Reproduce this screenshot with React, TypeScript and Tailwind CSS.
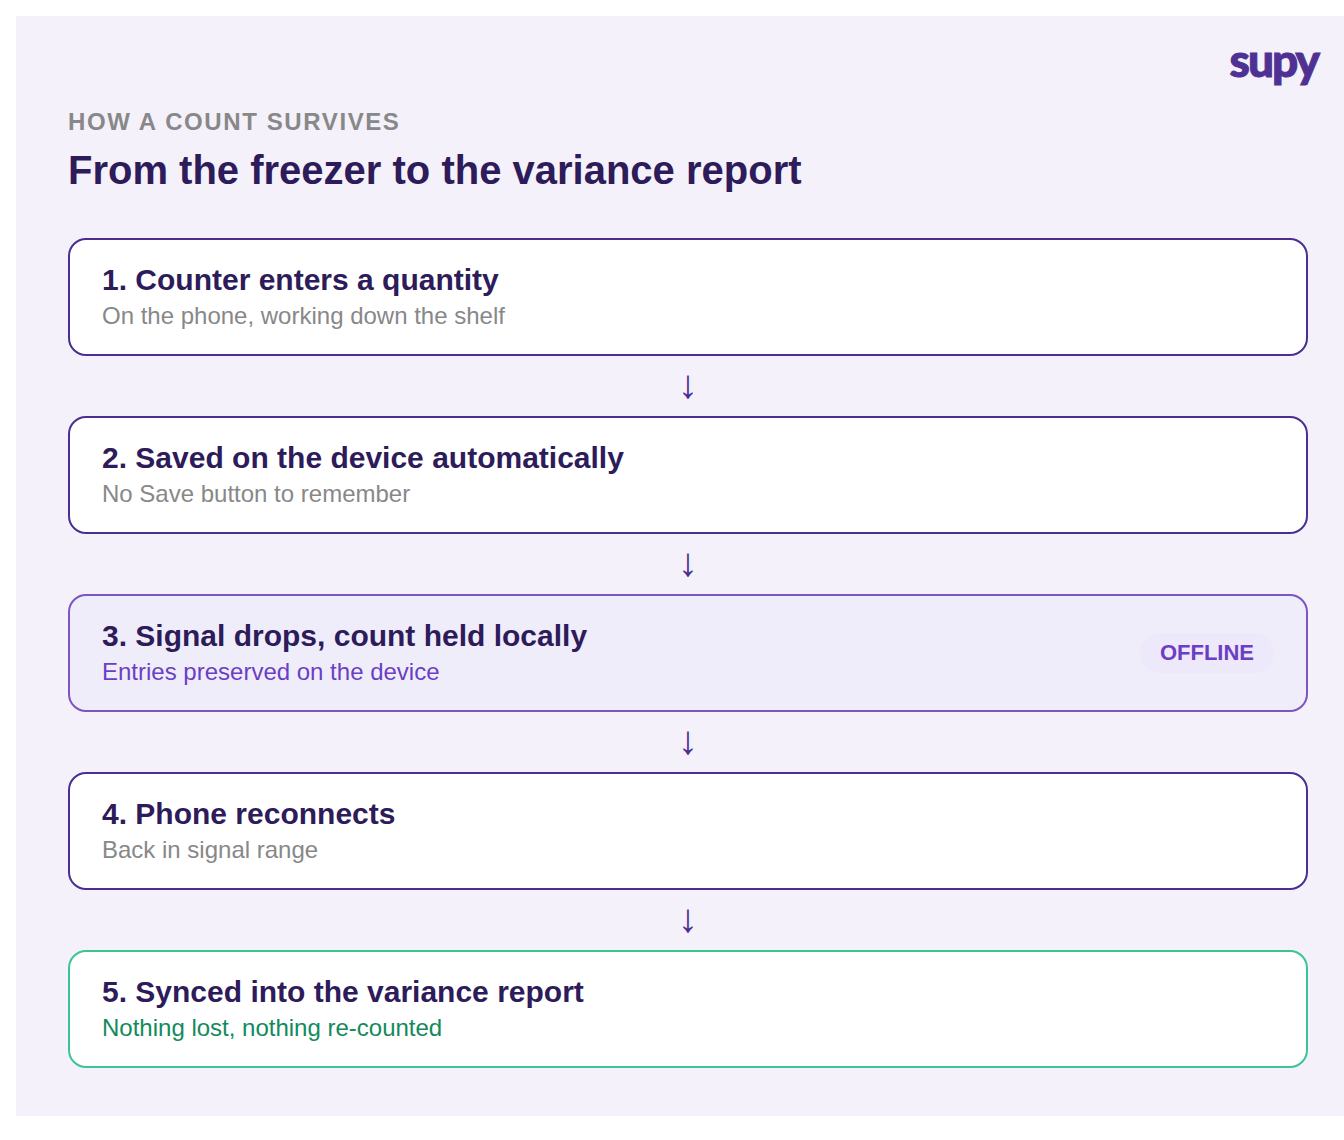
const steps = [
  { title: '1. Counter enters a quantity', sub: 'On the phone, working down the shelf', card: 'border-[#4b2e91] bg-white', subColor: 'text-[#888888]' },
  { title: '2. Saved on the device automatically', sub: 'No Save button to remember', card: 'border-[#4b2e91] bg-white', subColor: 'text-[#888888]' },
  { title: '3. Signal drops, count held locally', sub: 'Entries preserved on the device', card: 'border-[#7b55c0] bg-[#f0edfb]', subColor: 'text-[#6b3fc4]', badge: 'OFFLINE' },
  { title: '4. Phone reconnects', sub: 'Back in signal range', card: 'border-[#4b2e91] bg-white', subColor: 'text-[#888888]' },
  { title: '5. Synced into the variance report', sub: 'Nothing lost, nothing re-counted', card: 'border-[#3cc492] bg-white', subColor: 'text-[#128a5c]' },
];

export default function App() {
  return (
    <div className="bg-white p-4 pr-0 pb-6 font-['Liberation_Sans',sans-serif]">
      <div className="relative h-[1100px] bg-[#f4f1fb] pl-[52px] pr-9 pt-[90px]">
        <div className="absolute right-[26px] top-[18px] font-['Lato',sans-serif] text-[46px] font-black leading-[52px] tracking-[-2px] text-[#4f3193] [-webkit-text-stroke:1px_#4f3193]">
          supy
        </div>
        <div className="text-[24px] font-bold leading-8 tracking-[1.6px] text-[#888888]">HOW A COUNT SURVIVES</div>
        <h1 className="mt-2 text-[40px] font-bold leading-[48px] text-[#2d1b5a]">From the freezer to the variance report</h1>
        <div className="mt-11 flex flex-col">
          {steps.map((s, i) => (
            <div key={s.title}>
              {i > 0 && (
                <div className="flex h-[60px] items-center justify-center pb-1 text-[40px] leading-[52px] text-[#4b2e91]">↓</div>
              )}
              <div className={`flex h-[118px] items-center justify-between rounded-[18px] border-2 px-8 ${s.card}`}>
                <div className="pt-[2px]">
                  <div className="text-[30px] font-bold leading-9 text-[#2d1b5a]">{s.title}</div>
                  <div className={`text-[24px] leading-9 ${s.subColor}`}>{s.sub}</div>
                </div>
                {s.badge && (
                  <div className="rounded-full bg-[#ede8fa] px-5 py-[3px] text-[22px] font-bold leading-[34px] text-[#6b3fc4]">{s.badge}</div>
                )}
              </div>
            </div>
          ))}
        </div>
      </div>
    </div>
  );
}
